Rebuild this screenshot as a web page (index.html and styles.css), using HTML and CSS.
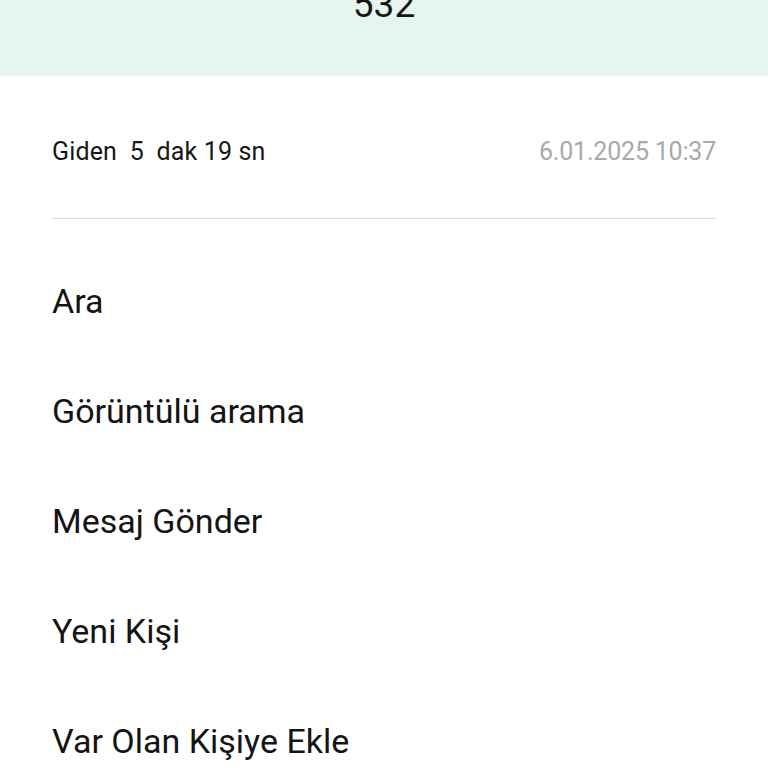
FILE: index.html
```html
<!DOCTYPE html>
<html lang="tr">
<head>
<meta charset="utf-8">
<link rel="stylesheet" href="styles.css">
</head>
<body>
<header class="top">
  <div class="number">532</div>
</header>
<main class="content">
  <div class="call-info">
    <span class="call-type">Giden  5  dak 19 sn</span>
    <span class="call-date">6.01.2025 10:37</span>
  </div>
  <ul class="actions">
    <li class="action">Ara</li>
    <li class="action">Görüntülü arama</li>
    <li class="action">Mesaj Gönder</li>
    <li class="action">Yeni Kişi</li>
    <li class="action">Var Olan Kişiye Ekle</li>
  </ul>
</main>
</body>
</html>
```

FILE: styles.css
```css
html, body {
  margin: 0;
  padding: 0;
  background: #ffffff;
  font-family: Roboto, "Noto Sans", sans-serif;
  color: #141414;
  overflow: hidden;
}

.top {
  height: 76px;
  background: #e7f5f1;
  display: flex;
  justify-content: center;
  overflow: hidden;
}

.number {
  font-size: 37px;
  line-height: 37px;
  margin-top: -14px;
  color: #161616;
}

.content {
  padding: 0 52px;
}

.call-info {
  display: flex;
  justify-content: space-between;
  align-items: baseline;
  padding: 63px 0 54px;
  border-bottom: 1px solid #dcdcdc;
  font-size: 25px;
  line-height: 25px;
}

.call-type {
  white-space: pre;
  color: #181818;
  letter-spacing: 0.15px;
}

.call-date {
  color: #a9a9a9;
  letter-spacing: -0.2px;
}

.actions {
  list-style: none;
  margin: 27px 0 0;
  padding: 0;
}

.action {
  font-size: 34px;
  line-height: 110px;
  height: 110px;
  color: #141414;
}
```
